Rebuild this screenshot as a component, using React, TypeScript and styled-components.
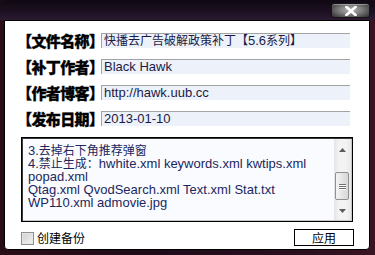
import React from 'react';
import styled, { createGlobalStyle } from 'styled-components';

const Global = createGlobalStyle`
  html, body { margin: 0; padding: 0; background: #1a0c16; }
  body { width: 375px; height: 255px; overflow: hidden; }
`;

const Window = styled.div`
  width: 375px;
  height: 255px;
  box-sizing: border-box;
  display: flex;
  flex-direction: column;
  padding: 0 5px 5px 4px;
  background: linear-gradient(90deg, #2a0e17 0%, #1e0c19 40%, #2a0f1f 80%, #3a1422 100%);
  border-radius: 6px 6px 0 0;
`;

const TitleBar = styled.div`
  height: 20px;
  flex: none;
  display: flex;
  justify-content: flex-end;
  align-items: flex-start;
  margin: 0 -5px 0 -4px;
  padding: 3px 5px 0 0;
  box-sizing: border-box;
  background: linear-gradient(#0f0812, #1d1122 60%, #2c1b33);
  border-radius: 6px 6px 0 0;
`;

const CloseButton = styled.div`
  width: 39px;
  height: 15px;
  box-sizing: border-box;
  border: 1px solid #151515;
  border-radius: 3px;
  background: radial-gradient(ellipse 60% 70% at 50% 45%, #b4b4b4 0%, #858585 45%, #3e3e3e 100%);
  box-shadow: inset 0 1px 0 rgba(255, 255, 255, 0.35);
  display: flex;
  align-items: center;
  justify-content: center;
`;

const Client = styled.div`
  flex: 1;
  background: #fff;
  border: 1px solid #000;
  border-radius: 0 0 4px 4px;
  display: flex;
  flex-direction: column;
  padding: 12px 16px 0 6px;
  min-height: 0;
`;

const Fields = styled.div`
  display: grid;
  grid-template-columns: 90px 1fr;
  grid-auto-rows: 16px;
  row-gap: 10px;
`;

const Label = styled.div`
  padding-left: 6px;
  font: 900 15px/16px "Noto Sans CJK SC", sans-serif;
  letter-spacing: -0.6px;
  -webkit-text-stroke: 0.35px #000;
  color: #000;
  white-space: nowrap;
`;

const Field = styled.div`
  height: 15px;
  margin-right: 3px;
  box-sizing: border-box;
  background: #edf2fa;
  border-top: 1px solid #a3a3a3;
  border-left: 1px solid #a3a3a3;
  padding-left: 2px;
  font: 13px/14px "Liberation Sans", "Noto Sans CJK SC", sans-serif;
  color: #1c1a44;
  white-space: nowrap;
`;

const Han = styled.span`
  font-family: "Noto Sans CJK SC", sans-serif;
  font-size: 12px;
  line-height: 10px;
`;

const TextBox = styled.div`
  margin: 10px 0 0 10px;
  height: 85px;
  flex: none;
  box-sizing: border-box;
  border: 1px solid #000;
  box-shadow: inset 1px 1px 0 #3a3a3a, inset -1px -1px 0 #c8c8c8;
  background: #f9fbfe;
  display: flex;
`;

const TextContent = styled.div`
  flex: 1;
  padding: 6px 0 0 6px;
  font: 13px/13px "Liberation Sans", "Noto Sans CJK SC", sans-serif;
  color: #1b275e;
  white-space: nowrap;
  overflow: hidden;
`;

const Line = styled.div`
  height: 13px;
`;

const ScrollBar = styled.div`
  width: 17px;
  margin: 1px 1px 1px 0;
  display: flex;
  flex-direction: column;
  background: linear-gradient(90deg, #e4e4e4, #f3f3f3 30%, #f3f3f3 70%, #e8e8e8);
`;

const ScrollArrow = styled.div<{ $h: number }>`
  height: ${(p) => p.$h}px;
  flex: none;
  display: flex;
  align-items: center;
  justify-content: center;
`;

const Track = styled.div`
  flex: 1;
  display: flex;
  flex-direction: column;
  padding-top: 11px;
`;

const Thumb = styled.div`
  height: 28px;
  margin: 0 2px 0 1px;
  box-sizing: border-box;
  border: 1px solid #8f8f8f;
  border-radius: 2px;
  background: linear-gradient(90deg, #f4f4f4, #e2e2e2 60%, #d8d8d8);
  display: flex;
  flex-direction: column;
  align-items: center;
  justify-content: center;
  gap: 1px;
`;

const Grip = styled.div`
  width: 7px;
  height: 1px;
  background: #6e6e6e;
  box-shadow: 0 1px 0 #fff;
`;

const Footer = styled.div`
  margin-top: 7px;
  height: 17px;
  flex: none;
  display: flex;
  align-items: center;
  justify-content: space-between;
`;

const CheckLabel = styled.label`
  margin-left: 10px;
  display: flex;
  align-items: center;
  gap: 3px;
  font: 12px/14px "Noto Sans CJK SC", sans-serif;
  color: #000;
`;

const CheckBox = styled.span`
  width: 13px;
  height: 13px;
  box-sizing: border-box;
  border: 1px solid #8e8f8f;
  background: linear-gradient(135deg, #d0d0d0, #f2f2f2);
  box-shadow: inset 0 0 0 1px #e6e6e6;
  margin-top: 1px;
`;

const Button = styled.div`
  width: 60px;
  height: 17px;
  margin-right: -1px;
  box-sizing: border-box;
  border: 1px solid #000;
  background: #fff;
  display: flex;
  align-items: center;
  justify-content: center;
  font: 12px/15px "Noto Sans CJK SC", sans-serif;
  color: #000;
`;

const Arrow = ({ down }: { down?: boolean }) => (
  <svg width="7" height="4" viewBox="0 0 7 4">
    <polygon points={down ? '0,0 7,0 3.5,4' : '3.5,0 7,4 0,4'} fill="#5c5c5c" />
  </svg>
);

const fields: [string, React.ReactNode][] = [
  ['【文件名称】', <><Han>快播去广告破解政策补丁【</Han>5.6<Han>系列】</Han></>],
  ['【补丁作者】', 'Black Hawk'],
  ['【作者博客】', 'http://hawk.uub.cc'],
  ['【发布日期】', '2013-01-10'],
];

export default function App() {
  return (
    <>
      <Global />
      <Window>
        <TitleBar>
          <CloseButton>
            <svg width="12" height="10" viewBox="0 0 12 10">
              <path d="M1.5 1 L10.5 9 M10.5 1 L1.5 9" stroke="#fff" strokeWidth="2.6" strokeLinecap="square" />
            </svg>
          </CloseButton>
        </TitleBar>
        <Client>
          <Fields>
            {fields.map(([label, value]) => (
              <React.Fragment key={label}>
                <Label>{label}</Label>
                <Field>{value}</Field>
              </React.Fragment>
            ))}
          </Fields>
          <TextBox>
            <TextContent>
              <Line>3.<Han>去掉右下角推荐弹窗</Han></Line>
              <Line>4.<Han>禁止生成：</Han>hwhite.xml keywords.xml kwtips.xml</Line>
              <Line>popad.xml</Line>
              <Line>Qtag.xml QvodSearch.xml Text.xml Stat.txt</Line>
              <Line>WP110.xml admovie.jpg</Line>
            </TextContent>
            <ScrollBar>
              <ScrollArrow $h={22}><Arrow /></ScrollArrow>
              <Track>
                <Thumb>
                  <Grip />
                  <Grip />
                  <Grip />
                </Thumb>
              </Track>
              <ScrollArrow $h={21}><Arrow down /></ScrollArrow>
            </ScrollBar>
          </TextBox>
          <Footer>
            <CheckLabel>
              <CheckBox />
              <span>创建备份</span>
            </CheckLabel>
            <Button>应用</Button>
          </Footer>
        </Client>
      </Window>
    </>
  );
}
